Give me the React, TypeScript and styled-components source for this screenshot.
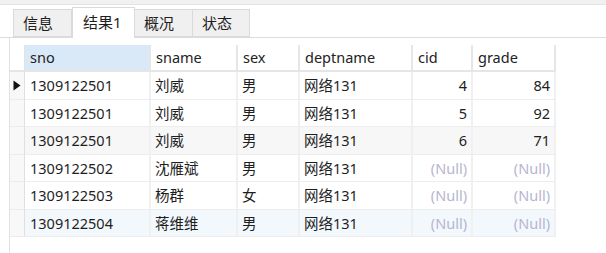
import React from "react";
import styled, { createGlobalStyle } from "styled-components";

const Global = createGlobalStyle`
  html, body { margin: 0; padding: 0; background: #ffffff; }
  body {
    font-family: "Noto Sans", "Noto Sans CJK SC", sans-serif;
    color: #1e1e1e;
    width: 606px;
    height: 253px;
    overflow: hidden;
  }
`;

const Page = styled.div`
  width: 606px;
  height: 253px;
  display: flex;
  flex-direction: column;
  background: #fff;
`;

const TopBand = styled.div`
  height: 4px;
  background: #f1f1f1;
  border-bottom: 1px solid #e4e4e4;
  flex: none;
`;

const TabBar = styled.div`
  height: 32px;
  flex: none;
  display: flex;
  align-items: flex-end;
  padding-left: 13px;
  border-bottom: 1px solid #dcdcdc;
`;

const Tab = styled.div<{ $active?: boolean; $first?: boolean; $w: number }>`
  box-sizing: border-box;
  width: ${(p) => p.$w}px;
  height: ${(p) => (p.$active ? 31 : 28)}px;
  margin-bottom: ${(p) => (p.$active ? -1 : 0)}px;
  background: ${(p) => (p.$active ? "#ffffff" : "#f0f0f0")};
  border: 1px solid #dadada;
  border-bottom: ${(p) => (p.$active ? "none" : "1px solid #dadada")};
  border-left: ${(p) => (p.$first || p.$active ? "1px solid #dadada" : "none")};
  display: flex;
  align-items: ${(p) => (p.$active ? "flex-start" : "center")};
  padding-top: ${(p) => (p.$active ? 3 : 0)}px;
  padding-left: ${(p) => (p.$active ? 10 : 9)}px;
  font-size: 15px;
  line-height: 22px;
  color: #1e1e1e;
  position: relative;
  z-index: ${(p) => (p.$active ? 1 : 0)};
`;

const Body = styled.div`
  flex: 1;
  margin-left: 9px;
  border-left: 1px solid #e2e2e2;
  padding-top: 7px;
`;

const Grid = styled.div`
  display: grid;
  grid-template-columns: 15px 126px 87px 62px 113px 60px 83px;
  grid-template-rows: 27px repeat(6, 27.5px);
  width: max-content;
`;

const HeadCell = styled.div<{ $sel?: boolean }>`
  box-sizing: border-box;
  background: ${(p) => (p.$sel ? "#d9e9f7" : "#ffffff")};
  border-right: 2px solid #e6e6e6;
  border-bottom: 2px solid #e6e6e6;
  font-size: 14.5px;
  line-height: 25px;
  padding-left: 5px;
  color: #222;
  white-space: nowrap;
`;

const Corner = styled.div`
  box-sizing: border-box;
  background: #ffffff;
  border-right: 1px solid #e2e2e2;
  border-bottom: 2px solid #e6e6e6;
`;

const Indicator = styled.div`
  box-sizing: border-box;
  background: #f8f8f8;
  border-right: 1px solid #e0e0e0;
  border-bottom: 1px solid #ececec;
  display: flex;
  align-items: center;
  padding-left: 3px;
`;

const Cell = styled.div<{ $bg: string; $right?: boolean; $null?: boolean; $first?: boolean }>`
  box-sizing: border-box;
  background: ${(p) => p.$bg};
  border-right: 2px solid #f0f0f0;
  border-bottom: 1px solid #ededed;
  font-size: 14.5px;
  line-height: 26px;
  padding: 0 4px 0 ${(p) => (p.$first ? 5 : 4)}px;
  text-align: ${(p) => (p.$right ? "right" : "left")};
  color: ${(p) => (p.$null ? "#b6b6d0" : "#1e1e1e")};
  white-space: nowrap;
  overflow: hidden;
`;

const Arrow = styled.svg`
  width: 8px;
  height: 11px;
  display: block;
`;

type Row = [string, string, string, string, string | null, string | null];

const rows: Row[] = [
  ["1309122501", "刘威", "男", "网络131", "4", "84"],
  ["1309122501", "刘威", "男", "网络131", "5", "92"],
  ["1309122501", "刘威", "男", "网络131", "6", "71"],
  ["1309122502", "沈雁斌", "男", "网络131", null, null],
  ["1309122503", "杨群", "女", "网络131", null, null],
  ["1309122504", "蒋维维", "男", "网络131", null, null],
];

const rowBg = ["#ffffff", "#ffffff", "#f7f7f7", "#ffffff", "#ffffff", "#f3f8fd"];

const headers = ["sno", "sname", "sex", "deptname", "cid", "grade"];

export default function App() {
  return (
    <Page>
      <Global />
      <TopBand />
      <TabBar>
        <Tab $w={59} $first>信息</Tab>
        <Tab $w={63} $active>结果1</Tab>
        <Tab $w={58}>概况</Tab>
        <Tab $w={57}>状态</Tab>
      </TabBar>
      <Body>
        <Grid>
          <Corner />
          {headers.map((h, i) => (
            <HeadCell key={h} $sel={i === 0}>
              {h}
            </HeadCell>
          ))}
          {rows.map((r, ri) => (
            <React.Fragment key={ri}>
              <Indicator>
                {ri === 0 && (
                  <Arrow viewBox="0 0 8 11">
                    <path d="M0.5 0.5 L7.5 5.5 L0.5 10.5 Z" fill="#111" />
                  </Arrow>
                )}
              </Indicator>
              {r.map((v, ci) => (
                <Cell
                  key={ci}
                  $bg={rowBg[ri]}
                  $first={ci === 0}
                  $right={ci >= 4}
                  $null={v === null}
                >
                  {v === null ? "(Null)" : v}
                </Cell>
              ))}
            </React.Fragment>
          ))}
        </Grid>
      </Body>
    </Page>
  );
}
